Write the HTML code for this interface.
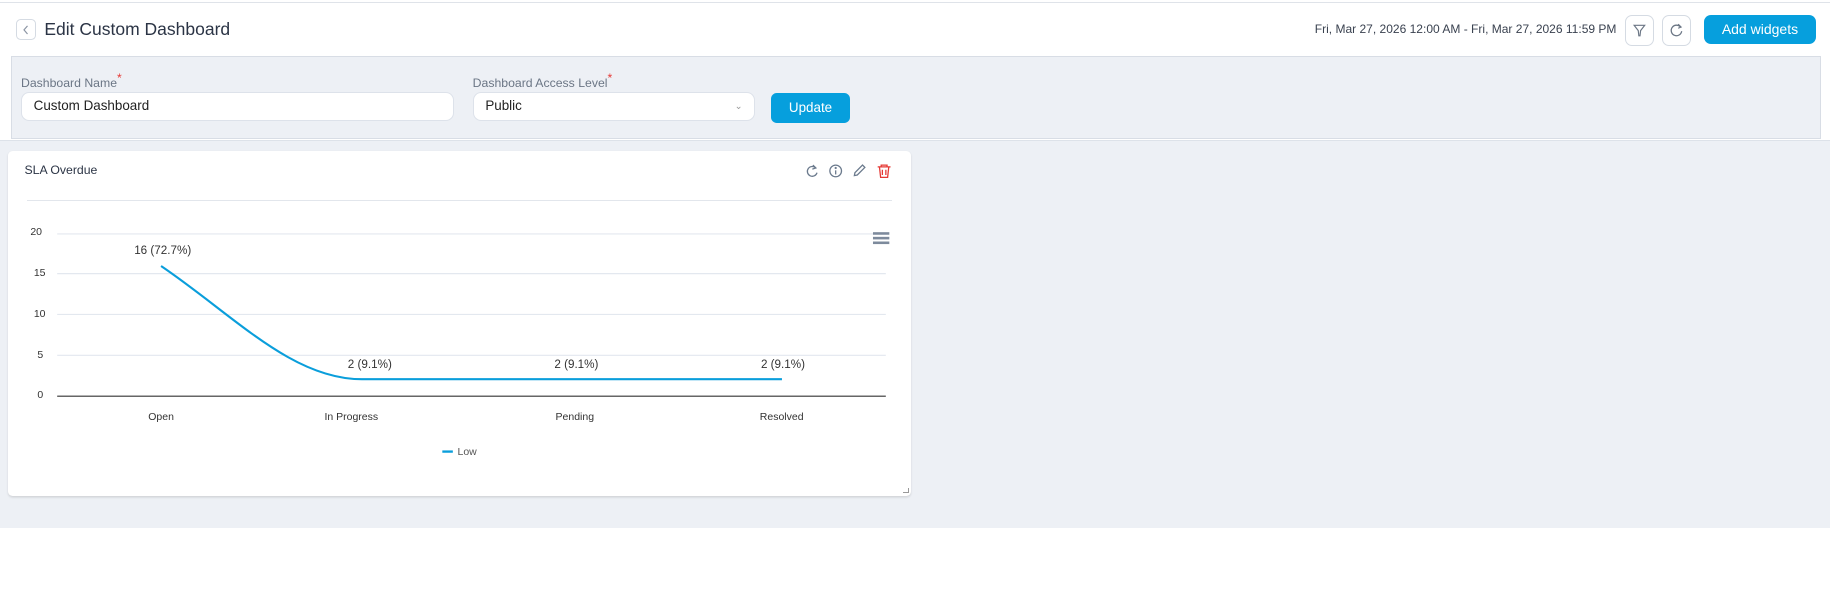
<!DOCTYPE html>
<html><head><meta charset="utf-8"><style>
html,body{margin:0;padding:0;background:#fff;overflow:hidden;width:1830px;height:598px}
#w{zoom:1.16709;width:1568px;height:512px;position:relative;font-family:"Liberation Sans",sans-serif;color:#2d3748}
.a{position:absolute}
.btn{position:absolute;border:1px solid #d5dbe3;border-radius:6px;background:#fff;box-sizing:border-box}
.inp{position:absolute;background:#fff;border:1px solid #dde2ea;border-radius:7px;box-sizing:border-box;font-size:11.5px;padding-left:10px;line-height:23px;color:#222}
.lbl{position:absolute;font-size:10.5px;color:#6b7685}
.lbl b{color:#e53935;font-weight:normal;position:relative;top:-4px}
.ax{position:absolute;font-size:9px;color:#333}
</style></head><body><div id="w">
<div class="a" style="left:0;top:2px;width:1568px;height:1px;background:#dfe3e9"></div>
<div class="btn" style="left:14px;top:16px;width:17px;height:18px;border-radius:4px"><svg width="15" height="16" style="position:absolute;left:0;top:0"><path d="M9 5 L6 8.5 L9 12" stroke="#8a94a3" fill="none" stroke-width="1"/></svg></div>
<div class="a" style="left:38px;top:16px;font-size:15px;color:#2b3445">Edit Custom Dashboard</div>
<div class="a" style="right:183px;top:19px;font-size:10.3px;color:#3a4250">Fri, Mar 27, 2026 12:00 AM - Fri, Mar 27, 2026 11:59 PM</div>
<div class="btn" style="left:1392px;top:13px;width:25px;height:26px"><svg width="23" height="24" style="position:absolute;left:0;top:0"><path d="M7 8 L16 8 L12.5 12.5 L12 17 L11 17 L10.5 12.5 Z" stroke="#6b7685" fill="none" stroke-width="1"/></svg></div>
<div class="btn" style="left:1424px;top:13px;width:25px;height:26px"><svg width="23" height="24" style="position:absolute;left:0;top:0"><path d="M15 9.5 A4.5 4.5 0 1 0 16 13" stroke="#6b7685" fill="none" stroke-width="1.1"/><path d="M13 7 L15.5 9.5 L13 10.5" stroke="#6b7685" fill="none" stroke-width="1"/></svg></div>
<div class="a" style="left:1460px;top:13px;width:96px;height:25px;background:#069fdd;border-radius:6px;color:#fff;font-size:12px;text-align:center;line-height:25px">Add widgets</div>
<div class="a" style="left:9px;top:48px;width:1550px;height:69px;background:#edf0f5;border:1px solid #d8dde5"></div>
<div class="lbl" style="left:18px;top:65px">Dashboard Name<b>*</b></div>
<div class="inp" style="left:18px;top:79px;width:371px;height:25px">Custom Dashboard</div>
<div class="lbl" style="left:405px;top:65px">Dashboard Access Level<b>*</b></div>
<div class="inp" style="left:405px;top:79px;width:242px;height:25px">Public<span style="position:absolute;right:10px;top:0;font-size:8px;color:#999">⌄</span></div>
<div class="a" style="left:661px;top:80px;width:67px;height:25px;background:#069fdd;border-radius:5px;color:#fff;font-size:11.5px;text-align:center;line-height:25px">Update</div>
<div class="a" style="left:0;top:120px;width:1568px;height:1px;background:#dde2e9"></div>
<div class="a" style="left:0;top:121px;width:1568px;height:331px;background:#edf0f5"></div>
<div class="a" style="left:7px;top:129px;width:774px;height:296px;background:#fff;border-radius:4px;box-shadow:0 1px 2px rgba(0,0,0,.12)"></div>
<div class="a" style="left:21px;top:140px;font-size:10.5px;color:#2b3445">SLA Overdue</div>
<svg class="a" style="left:688px;top:138px" width="80" height="18">
<g stroke="#6b7a8d" fill="none" stroke-width="1.1">
<path d="M11 6 A4.2 4.2 0 1 0 12 10"/><path d="M8.5 3.5 L11 6 L8 7"/>
<circle cx="28" cy="8.5" r="5"/><path d="M28 8 V11.5"/><circle cx="28" cy="6" r=".4"/>
<path d="M44 12.5 L44.5 10 L51 3.5 L53 5.5 L46.5 12 Z"/>
</g>
<g stroke="#e53935" fill="none" stroke-width="1.1"><path d="M64 5 H75 M67 5 V3.5 H72 V5 M65.5 5 L66.5 14 H72.5 L73.5 5 M68 7.5 V12 M71 7.5 V12"/></g>
</svg>
<div class="a" style="left:23px;top:171px;width:741px;height:1px;background:#e2e6ec"></div>
<svg class="a" style="left:0;top:180px" width="781" height="230">
<g stroke="#e3e8ef" stroke-width="1"><path d="M49 20.5H759M49 54.5H759M49 89.5H759M49 124.5H759"/></g>
<path d="M49 159.5H759" stroke="#333" stroke-width="1"/>
<g fill="#7d8a9c"><rect x="748" y="19" width="14" height="2.2"/><rect x="748" y="23" width="14" height="2.2"/><rect x="748" y="27" width="14" height="2.2"/></g>
<path d="M138 48 C 200 90, 250 145, 310 145 L670 145" stroke="#0a9edb" stroke-width="1.8" fill="none"/>
<rect x="379" y="206" width="9" height="2" fill="#0a9edb"/>
</svg>
<div class="ax" style="left:26px;top:194px">20</div>
<div class="ax" style="left:29px;top:229px">15</div>
<div class="ax" style="left:29px;top:264px">10</div>
<div class="ax" style="left:32px;top:299px">5</div>
<div class="ax" style="left:32px;top:333px">0</div>
<div class="ax" style="left:115px;top:209px;font-size:10px">16 (72.7%)</div>
<div class="ax" style="left:298px;top:307px;font-size:10px">2 (9.1%)</div>
<div class="ax" style="left:475px;top:307px;font-size:10px">2 (9.1%)</div>
<div class="ax" style="left:652px;top:307px;font-size:10px">2 (9.1%)</div>
<div class="ax" style="left:127px;top:352px">Open</div>
<div class="ax" style="left:278px;top:352px">In Progress</div>
<div class="ax" style="left:476px;top:352px">Pending</div>
<div class="ax" style="left:651px;top:352px">Resolved</div>
<div class="ax" style="left:392px;top:382px;color:#555">Low</div>
<div class="a" style="left:774px;top:418px;width:4px;height:4px;border-right:1px solid #999;border-bottom:1px solid #999"></div>
</div></body></html>
